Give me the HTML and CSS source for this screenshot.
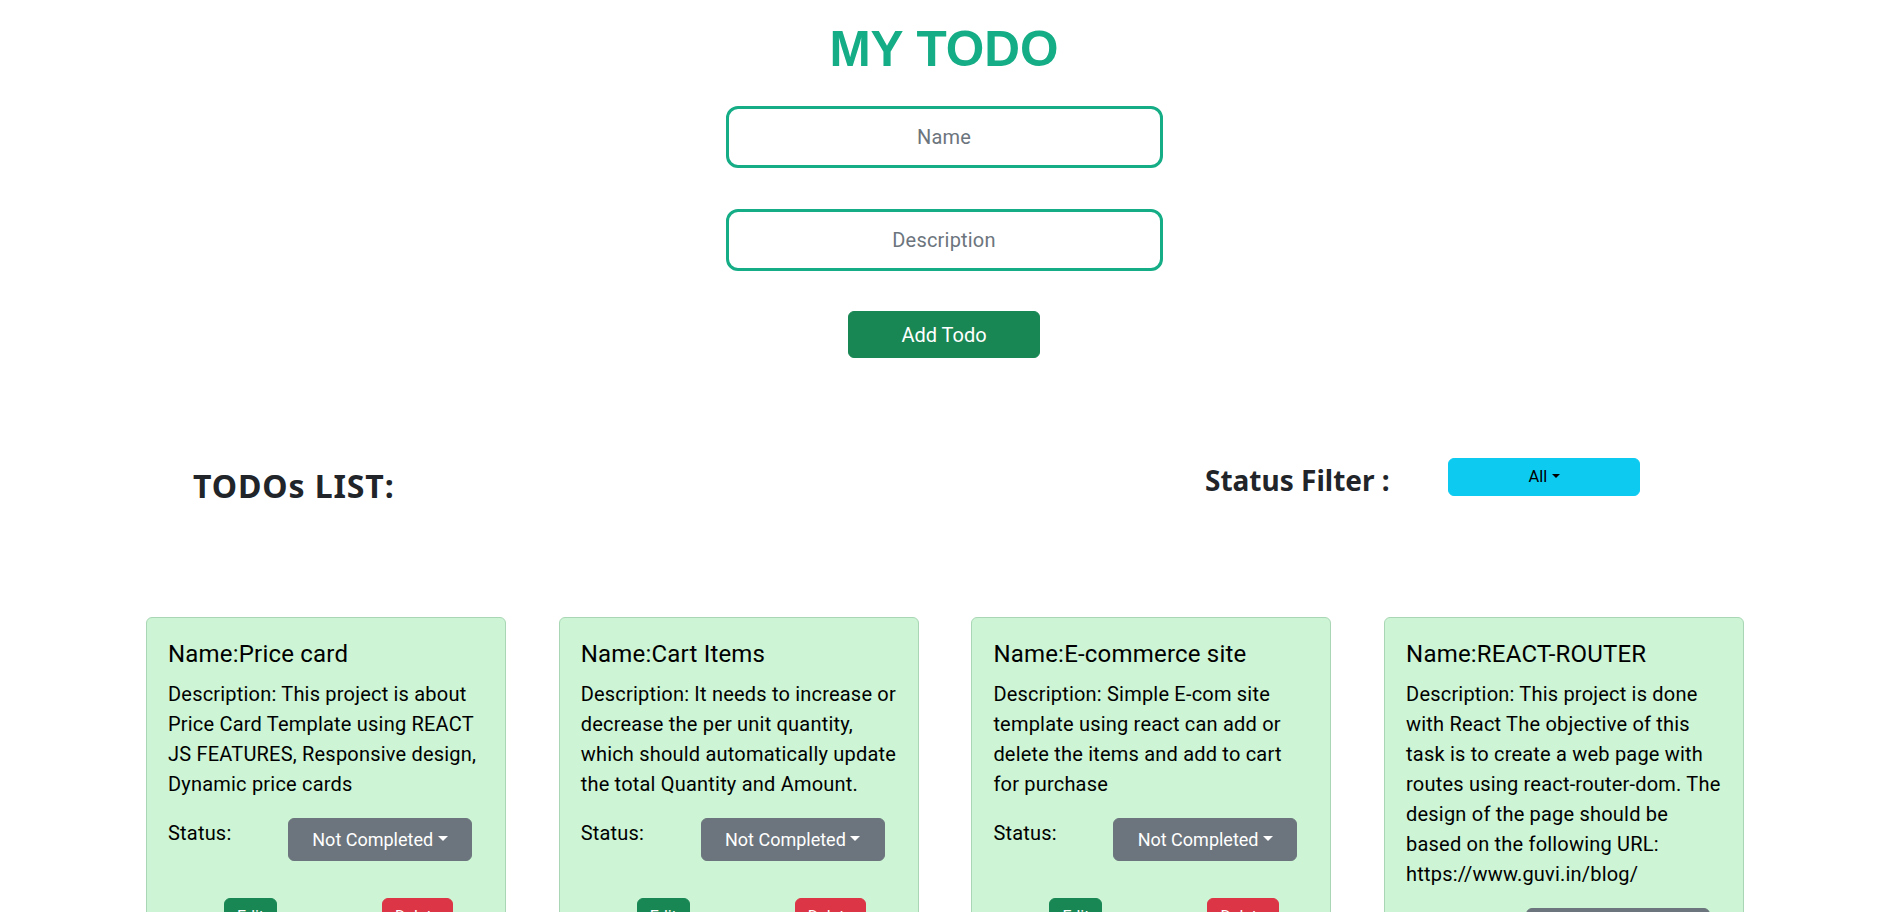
FILE: index.html
```html
<!DOCTYPE html>
<html lang="en">
<head>
<meta charset="utf-8">
<title>My Todo</title>
<link rel="stylesheet" href="styles.css">
</head>
<body>
<main class="app">
  <section class="form-section">
    <h1 class="app-title">MY TODO</h1>
    <input class="todo-input" type="text" placeholder="Name">
    <input class="todo-input todo-input-desc" type="text" placeholder="Description">
    <button class="btn btn-success btn-add" type="button">Add Todo</button>
  </section>

  <section class="list-header">
    <h2 class="list-title">TODOs LIST:</h2>
    <h3 class="filter-label">Status Filter :</h3>
    <button class="btn btn-info btn-filter dropdown-toggle" type="button">All</button>
  </section>

  <section class="cards">
    <article class="card">
      <h4 class="card-title">Name:Price card</h4>
      <p class="card-desc">Description: This project is about Price Card Template using REACT JS FEATURES, Responsive design, Dynamic price cards</p>
      <div class="status-row">
        <span class="status-label">Status:</span>
        <button class="btn btn-secondary btn-status dropdown-toggle" type="button">Not Completed</button>
      </div>
      <div class="card-actions">
        <button class="btn btn-success" type="button">Edit</button>
        <button class="btn btn-danger" type="button">Delete</button>
      </div>
    </article>

    <article class="card">
      <h4 class="card-title">Name:Cart Items</h4>
      <p class="card-desc">Description: It needs to increase or decrease the per unit quantity, which should automatically update the total Quantity and Amount.</p>
      <div class="status-row">
        <span class="status-label">Status:</span>
        <button class="btn btn-secondary btn-status dropdown-toggle" type="button">Not Completed</button>
      </div>
      <div class="card-actions">
        <button class="btn btn-success" type="button">Edit</button>
        <button class="btn btn-danger" type="button">Delete</button>
      </div>
    </article>

    <article class="card">
      <h4 class="card-title">Name:E-commerce site</h4>
      <p class="card-desc">Description: Simple E-com site template using react can add or delete the items and add to cart for purchase</p>
      <div class="status-row">
        <span class="status-label">Status:</span>
        <button class="btn btn-secondary btn-status dropdown-toggle" type="button">Not Completed</button>
      </div>
      <div class="card-actions">
        <button class="btn btn-success" type="button">Edit</button>
        <button class="btn btn-danger" type="button">Delete</button>
      </div>
    </article>

    <article class="card">
      <h4 class="card-title">Name:REACT-ROUTER</h4>
      <p class="card-desc">Description: This project is done with React The objective of this task is to create a web page with routes using react-router-dom. The design of the page should be based on the following URL: https://www.guvi.in/blog/</p>
      <div class="status-row">
        <span class="status-label">Status:</span>
        <button class="btn btn-secondary btn-status dropdown-toggle" type="button">Not Completed</button>
      </div>
      <div class="card-actions">
        <button class="btn btn-success" type="button">Edit</button>
        <button class="btn btn-danger" type="button">Delete</button>
      </div>
    </article>
  </section>
</main>
</body>
</html>
```

FILE: styles.css
```css
body {
  margin: 0;
  font-family: Roboto, "Noto Sans", sans-serif;
  color: #212529;
  background: #fff;
}

.form-section {
  display: flex;
  flex-direction: column;
  align-items: center;
  padding-left: 11px;
}

.app-title {
  margin: 19px 0 0;
  font: 700 49.5px/1.2 "Liberation Sans", Arial, sans-serif;
  color: #14ad86;
}

.todo-input {
  box-sizing: border-box;
  width: 437px;
  height: 62px;
  margin-top: 28px;
  border: 3px solid #14ad86;
  border-radius: 12px;
  background: #fff;
  text-align: center;
  font: 400 20px Roboto, "Noto Sans", sans-serif;
  letter-spacing: 0.2px;
  color: #212529;
  outline: none;
}

.todo-input::placeholder {
  color: #6c757d;
}

.todo-input-desc {
  margin-top: 41px;
}

.btn {
  display: inline-block;
  box-sizing: border-box;
  font-family: inherit;
  font-size: 16px;
  line-height: 1.5;
  padding: 6px 12px;
  border: 1px solid transparent;
  border-radius: 6px;
  color: #fff;
  text-align: center;
  cursor: pointer;
}

.btn-success { background: #198754; border-color: #198754; }
.btn-danger { background: #dc3545; border-color: #dc3545; }
.btn-secondary { background: #6c757d; border-color: #6c757d; }
.btn-info { background: #0dcaf0; border-color: #0dcaf0; color: #000; }

.btn-add {
  margin-top: 40px;
  width: 192px;
  height: 47px;
  font-size: 20px;
  padding: 0;
}

.dropdown-toggle::after {
  content: "";
  display: inline-block;
  margin-left: 0.255em;
  vertical-align: 0.255em;
  border-top: 0.3em solid;
  border-right: 0.3em solid transparent;
  border-left: 0.3em solid transparent;
  border-bottom: 0;
}

.list-header {
  display: flex;
  align-items: flex-start;
  margin-top: 100px;
  padding-left: 193px;
}

.list-title {
  flex: 0 0 1012px;
  margin: 9px 0 0;
  font: 700 32px/1.2 "Noto Sans", Roboto, sans-serif;
  letter-spacing: 0.9px;
}

.filter-label {
  flex: 0 0 243px;
  margin: 6px 0 0;
  font: 700 28px/1.2 "Noto Sans", Roboto, sans-serif;
}

.btn-filter {
  width: 192px;
  height: 38px;
  padding: 0;
  font-size: 16.5px;
}

.cards {
  display: grid;
  grid-template-columns: repeat(4, 360px);
  column-gap: 52.7px;
  align-items: start;
  margin-top: 111px;
  padding-left: 146px;
}

.card {
  border: 1px solid #a9d7b5;
  border-radius: 6px;
  background: #ccf4d5;
  padding: 22px 21px 21px;
  color: #000;
  letter-spacing: 0.2px;
}

.card-title {
  margin: 0 0 10px;
  font-size: 24px;
  font-weight: 400;
  line-height: 1.2;
}

.card-desc {
  margin: 0;
  font-size: 20px;
  line-height: 30px;
}

.status-row {
  display: grid;
  grid-template-columns: 120px 184px;
  align-items: start;
  margin-top: 19px;
}

.status-label {
  font-size: 20px;
  line-height: 30px;
}

.btn-status {
  width: 184px;
  height: 43px;
  padding: 0;
  font-size: 18px;
  letter-spacing: 0;
}

.card-actions {
  display: flex;
  gap: 105px;
  margin-top: 37px;
  padding-left: 56px;
}

.card-actions .btn {
  letter-spacing: 0;
}
```
